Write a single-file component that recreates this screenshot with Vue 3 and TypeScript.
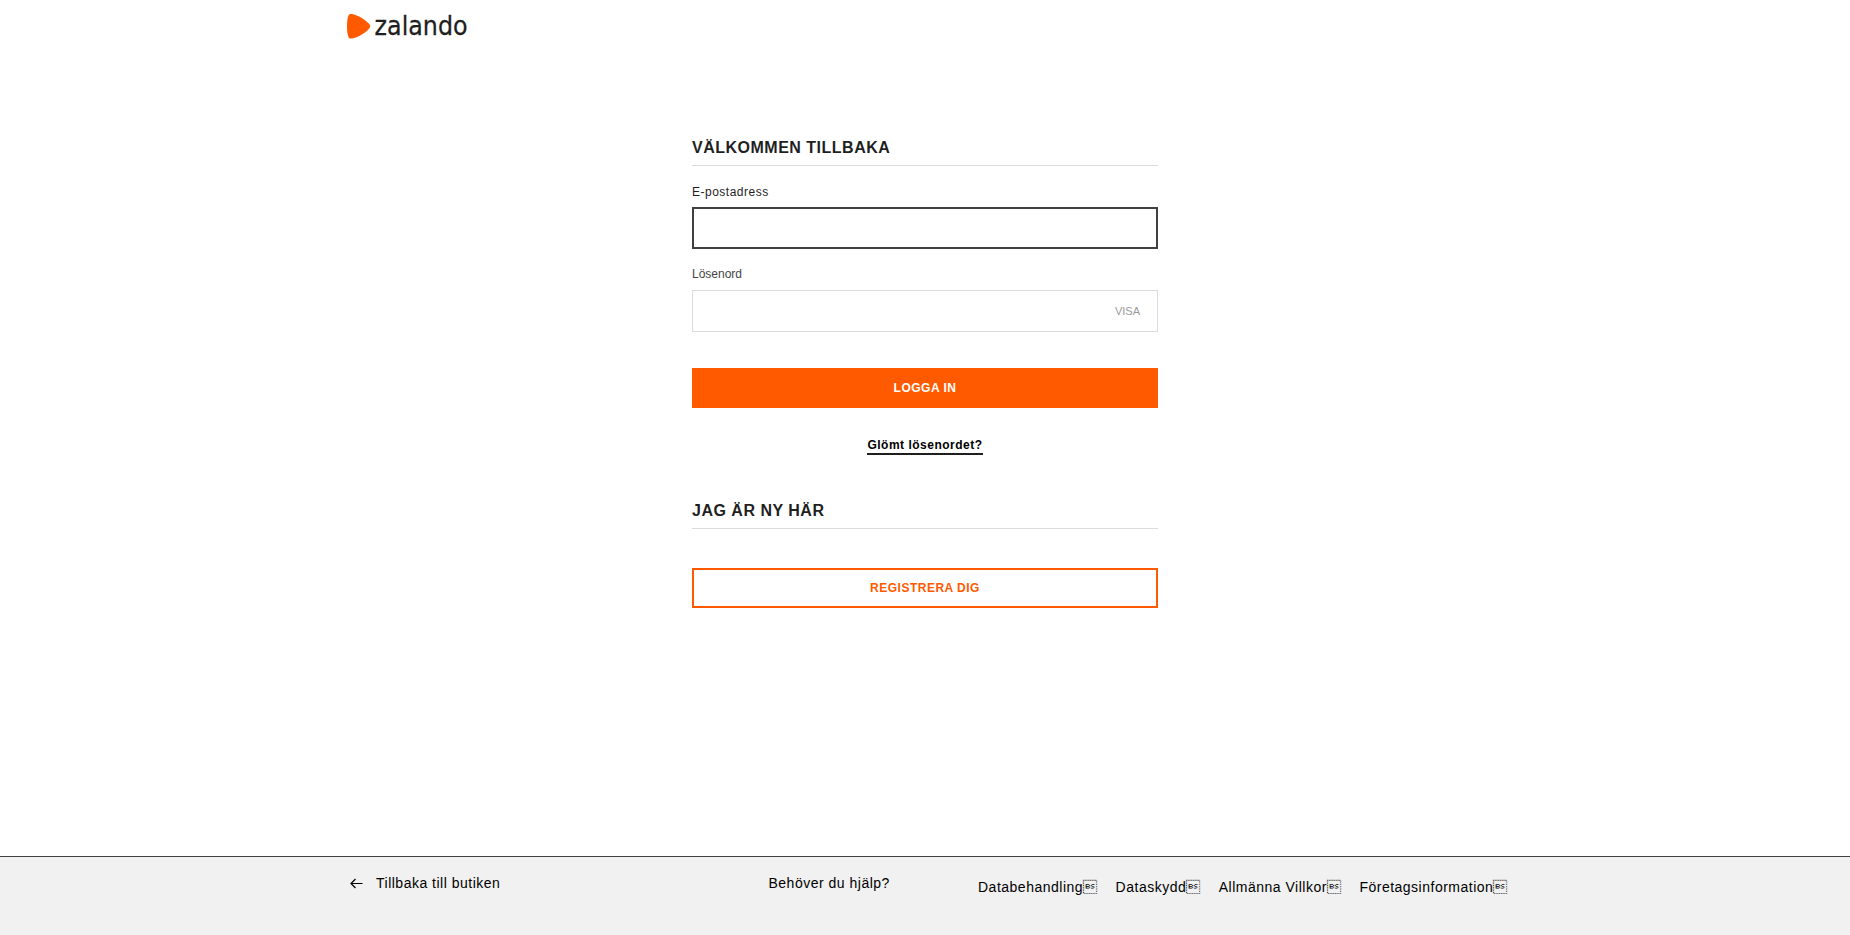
<script setup lang="ts">
import { ref } from 'vue'

const email = ref('')
const password = ref('')
const passwordVisible = ref(false)

const legalLinks: string[] = ['Databehandling', 'Dataskydd', 'Allmänna Villkor', 'Företagsinformation']
const linkMark = '\u0008'
</script>

<template>
  <div class="page">
    <header class="header">
      <svg class="logo" width="130" height="48" viewBox="0 0 130 48" role="img" aria-label="zalando">
        <path
          d="M2.600 1C1.500 3 .9 7 .9 12.600s.6 9.600 1.700 11.600c.7 1.200 2.200 1.400 4.200.9 5.600-1.400 11.700-5 15.900-9.700 1.900-2.100 1.900-3.600 0-5.600C18.500 5.100 12.400 1.500 6.800.1 4.800-.4 3.300-.2 2.600 1z"
          transform="translate(.1 14.200) scale(1 .96)"
          fill="#ff5a00"
        />
        <text class="wordmark" x="28.600" y="34.600" textLength="93" lengthAdjust="spacingAndGlyphs">zalando</text>
      </svg>
    </header>

    <main class="content">
      <h1 class="title">VÄLKOMMEN TILLBAKA</h1>
      <form class="form" @submit.prevent>
        <label class="label" for="email">E-postadress</label>
        <input id="email" v-model="email" class="field field-active" type="email" />
        <label class="label label-password" for="password">Lösenord</label>
        <div class="field field-password">
          <input id="password" v-model="password" class="password" :type="passwordVisible ? 'text' : 'password'" />
          <button class="toggle" type="button" @click="passwordVisible = !passwordVisible">VISA</button>
        </div>
        <button class="button primary" type="submit">LOGGA IN</button>
      </form>
      <a class="forgot">Glömt lösenordet?</a>
      <h2 class="title">JAG ÄR NY HÄR</h2>
      <button class="button secondary" type="button">REGISTRERA DIG</button>
    </main>

    <footer class="footer">
      <div class="footer-inner">
        <a class="back">
          <svg class="arrow" width="13" height="11" viewBox="0 0 13 11" fill="none" stroke="#000" stroke-width="1.200">
            <path d="M12.500 5.500H1M5.500 1 1 5.500 5.500 10" />
          </svg>
          <span>Tillbaka till butiken</span>
        </a>
        <a class="help">Behöver du hjälp?</a>
        <nav class="legal">
          <a v-for="link in legalLinks" :key="link">{{ link }}{{ linkMark }}</a>
        </nav>
      </div>
    </footer>
  </div>
</template>

<style>
body {
  margin: 0;
  background: #fff;
}
</style>

<style scoped>
.page {
  display: flex;
  flex-direction: column;
  height: 935px;
  font-family: "Liberation Sans", Arial, sans-serif;
  color: #1f1f1f;
}
.header {
  width: 1158px;
  height: 138px;
  margin: 0 auto;
}
.logo {
  display: block;
  overflow: visible;
}
.wordmark {
  font-family: "DejaVu Sans", sans-serif;
  font-size: 26px;
  fill: #1f1f1f;
  stroke: #1f1f1f;
  stroke-width: 0.3px;
}
.content {
  display: flex;
  flex-direction: column;
  width: 466px;
  margin: 0 auto;
}
.title {
  box-sizing: border-box;
  height: 28px;
  margin: 0;
  border-bottom: 1px solid #dcdcdc;
  font-size: 16px;
  line-height: 20px;
  letter-spacing: 0.5px;
}
.form {
  display: flex;
  flex-direction: column;
}
.label {
  height: 14px;
  margin: 19px 0 8px;
  font-size: 12px;
  line-height: 14px;
  letter-spacing: 0.5px;
}
.label-password {
  margin-top: 18px;
  margin-bottom: 9px;
  letter-spacing: 0;
  color: #444;
}
.field {
  box-sizing: border-box;
  width: 466px;
  height: 42px;
  padding: 0 12px;
  border: 1px solid #dcdcdc;
  border-radius: 0;
  outline: none;
  background: #fff;
}
.field-active {
  border: 2px solid #404040;
}
.field-password {
  display: flex;
  align-items: center;
  padding-right: 17px;
}
.password {
  flex: 1;
  min-width: 0;
  padding: 0;
  border: 0;
  outline: none;
  background: transparent;
}
.toggle {
  padding: 0;
  border: 0;
  background: none;
  font: 11px/12px "Liberation Sans", Arial, sans-serif;
  color: #999;
}
.button {
  box-sizing: border-box;
  width: 466px;
  height: 40px;
  padding: 0;
  border: 0;
  font: bold 12px/14px "Liberation Sans", Arial, sans-serif;
  letter-spacing: 0.5px;
}
.primary {
  margin-top: 36px;
  background: #ff5a00;
  color: #fff;
}
.forgot {
  align-self: center;
  height: 15px;
  margin: 30px 0 46px;
  border-bottom: 2px solid #1f1f1f;
  font-size: 12px;
  font-weight: bold;
  line-height: 14px;
  letter-spacing: 0.5px;
  color: #000;
}
.secondary {
  margin-top: 39px;
  border: 2px solid #ff5a00;
  background: #fff;
  color: #ff5a00;
}
.footer {
  box-sizing: border-box;
  height: 79px;
  margin-top: auto;
  border-top: 1px solid #404040;
  background: #f1f1f1;
  font-size: 14px;
  line-height: 16px;
  letter-spacing: 0.5px;
  color: #000;
}
.footer-inner {
  display: grid;
  grid-template-columns: 422.5px 209.5px 526px;
  width: 1158px;
  margin: 0 auto;
  padding-top: 18px;
}
.back {
  display: flex;
  gap: 13px;
}
.arrow {
  margin: 3px 0 0 4px;
}
.legal {
  display: flex;
  gap: 18px;
  padding-top: 4px;
  white-space: nowrap;
}
</style>
